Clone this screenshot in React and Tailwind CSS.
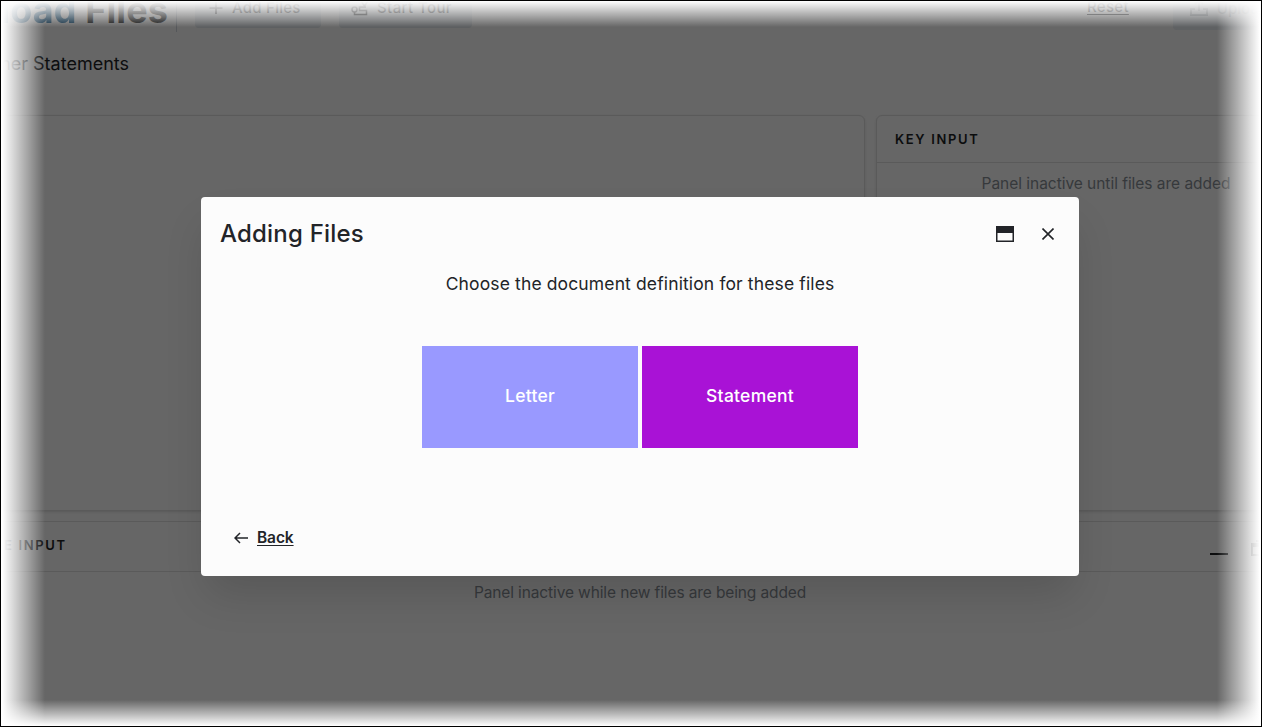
import React from "react";

function FileUploadIcon({ className = "" }) {
  return (
    <svg className={className} width="18" height="18" viewBox="0 0 18 18" fill="none" stroke="currentColor" strokeWidth="2">
      <path d="M9 13V2M5 6l4-4 4 4M5 11H1v6h16v-6h-4" />
    </svg>
  );
}

function TourIcon() {
  return (
    <svg className="mt-[2px]" width="17" height="18" viewBox="0 0 17 18" fill="none" stroke="currentColor" strokeWidth="1.500">
      <circle cx="3.5" cy="11.5" r="2.5" />
      <path d="M3.500 14v2.500H15.500v-4H8.500V9H15" />
      <path d="M11 1.500h5v3L13.500 8 11 4.500z" />
    </svg>
  );
}

function WindowIcon() {
  return (
    <svg width="18" height="16" viewBox="0 0 18 16" fill="none">
      <path d="M.75.75h16.500v14.500H.75z" stroke="currentColor" strokeWidth="1.500" />
      <path d="M0 0h18v7H0z" fill="currentColor" />
    </svg>
  );
}

function PanelTitle({ children }) {
  return <h2 className="text-[13px] font-semibold tracking-[1.65px] text-[#0c0d0e]">{children}</h2>;
}

function Header() {
  return (
    <header className="-mt-4 flex h-[48px] items-start text-[15px] font-medium text-[#0c0d0e]">
      <h1 className="flex h-[48px] w-[224px] items-center justify-end whitespace-nowrap pt-[3px] text-[36px] font-bold tracking-[0.1px] text-[#111]">
        <span className="bg-linear-to-r from-[#0b2538] to-[#0f2c40] bg-clip-text text-transparent">Upload</span>
        <span>&nbsp;Files</span>
      </h1>
      <div className="ml-[8px] h-[48px] w-px bg-[#55575a]" />
      <button className="ml-[18px] flex h-[44px] w-[126px] items-center rounded bg-[#5d5f61] pl-[13px]">
        <svg className="mt-[4px]" width="16" height="16" viewBox="0 0 16 16" stroke="currentColor" strokeWidth="1.500">
          <path d="M8 1v13M1.500 8h13" />
        </svg>
        <span className="ml-[8px] mt-[4px] tracking-[0.25px]">Add Files</span>
      </button>
      <button className="ml-[18px] flex h-[44px] w-[133px] items-center rounded bg-[#5d5f61] pl-[12px]">
        <TourIcon />
        <span className="ml-[9px] mt-[4px] tracking-[0.4px]">Start Tour</span>
      </button>
      <a className="ml-[615px] mt-[12px] tracking-[0.3px] underline underline-offset-2">Reset</a>
      <button className="ml-[44px] flex h-[46px] w-[163px] items-center rounded bg-[#5f6163] pl-[17px] text-[#45484b]">
        <FileUploadIcon />
        <span className="ml-[9px] mt-[4px]">Upload</span>
      </button>
    </header>
  );
}

function Workspace() {
  return (
    <div className="-ml-[56px] w-[1392px]">
      <Header />
      <p className="mt-[19px] flex h-6 w-[185px] items-center justify-end whitespace-nowrap text-[18px] text-[#0c0d0e]">
        Customer Statements
      </p>
      <main className="mt-[40px] flex gap-[11px]">
        <section className="h-[396px] w-[921px] rounded-md border border-[#5a5a5a] shadow-[0_1px_2px_#5a5a5a]" />
        <section className="h-[396px] w-[460px] rounded-md border border-[#5a5a5a] shadow-[0_1px_2px_#5a5a5a]">
          <div className="flex h-[47px] items-center border-b border-[#5a5a5a] pl-[18px] pt-[2px]">
            <PanelTitle>KEY INPUT</PanelTitle>
          </div>
          <p className="mt-[9px] text-center text-[15.500px] tracking-[-0.03px] text-[#36393c]">Panel inactive until files are added</p>
        </section>
      </main>
      <section className="mt-[10px] h-[260px] border border-[#5a5a5a]">
        <div className="flex h-[50px] items-center border-b border-[#5a5a5a] pl-[59px]">
          <div className="-mt-px w-[64px] whitespace-nowrap">
            <PanelTitle>E INPUT</PanelTitle>
          </div>
          <div className="ml-[1142px] mt-[15px] h-[2px] w-[18px] bg-[#0c0d0e]" />
          <svg className="ml-[23px] mt-[3px]" width="20" height="20" viewBox="0 0 20 20" fill="none" stroke="#0c0d0e" strokeWidth="2">
            <path d="M1 6h13v11H1zM1 8h13M5 3h13v11" />
          </svg>
        </div>
        <p className="mt-[9px] text-center text-[15.500px] tracking-[-0.12px] text-[#36393c]">Panel inactive while new files are being added</p>
      </section>
    </div>
  );
}

function AddFilesDialog() {
  return (
    <div className="absolute left-[201px] top-[197px] flex h-[379px] w-[878px] flex-col rounded bg-[#fcfcfc] text-[#222428] shadow-[0_24px_40px_-6px_rgba(0,0,0,0.14)]">
      <div className="flex h-[74px] items-center pl-[19px] pr-[25px]">
        <h2 className="flex-1 text-[24px] font-medium tracking-[0.2px]">Adding Files</h2>
        <WindowIcon />
        <svg className="ml-[28px]" width="12" height="12" viewBox="0 0 12 12" stroke="currentColor" strokeWidth="1.600">
          <path d="M.5.5l11 11M11.500.5l-11 11" />
        </svg>
      </div>
      <p className="text-center text-[17.500px] leading-[26px] tracking-[0.13px]">Choose the document definition for these files</p>
      <div className="mt-[49px] flex justify-center gap-1 text-[17.500px] font-medium tracking-[0.25px] text-white">
        <button className="h-[102px] w-[216px] bg-[#9999ff] pb-[2px]">Letter</button>
        <button className="h-[102px] w-[216px] bg-[#a912d6] pb-[2px]">Statement</button>
      </div>
      <a className="ml-[33px] mt-[78px] flex items-center text-[15.500px] font-semibold">
        <svg width="14" height="12" viewBox="0 0 14 12" fill="none" stroke="currentColor" strokeWidth="1.500">
          <path d="M14 6H1M6 1L1 6l5 5" />
        </svg>
        <span className="ml-[9px] tracking-[-0.1px] underline underline-offset-2">Back</span>
      </a>
    </div>
  );
}

// white vignette along the four edges, with a thin black outline
function EdgeFade() {
  return (
    <div className="pointer-events-none absolute inset-0 border border-black">
      <div className="absolute inset-y-0 left-0 w-[44px] bg-linear-to-r from-white from-3% to-transparent" />
      <div className="absolute inset-y-0 right-0 w-[44px] bg-linear-to-l from-white from-3% to-transparent" />
      <div className="absolute inset-x-0 top-0 h-[26px] bg-linear-to-b from-white to-transparent" />
      <div className="absolute inset-x-0 bottom-0 h-[26px] bg-linear-to-t from-white to-transparent" />
    </div>
  );
}

export default function App() {
  return (
    <div className="relative flex h-[727px] w-[1262px] flex-col overflow-hidden bg-[#666] font-['Inter','Open_Sans',sans-serif]">
      <Workspace />
      <AddFilesDialog />
      <EdgeFade />
    </div>
  );
}
